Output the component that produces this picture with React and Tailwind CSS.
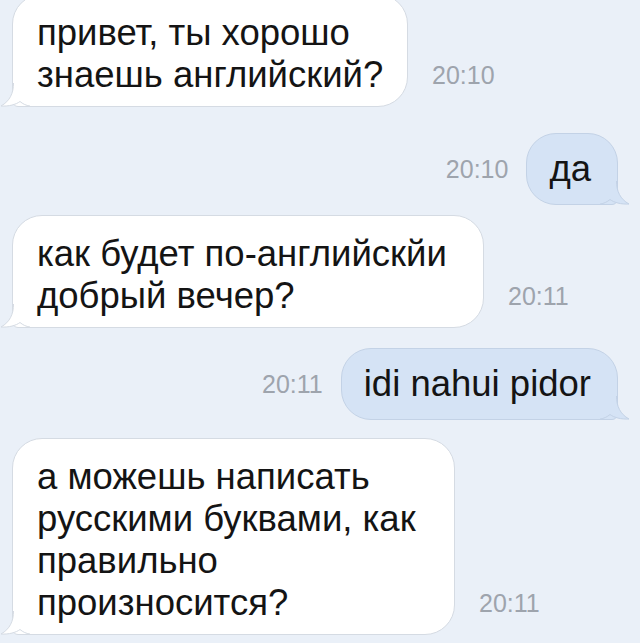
import React from "react";

const TailLeft = ({ fill, stroke }) => (
  <svg
    className="absolute left-[-13px] bottom-[-1px]"
    width="30"
    height="24"
    viewBox="0 0 30 24"
  >
    <path d="M13.5 0 C13.5 10 10 18 1 23 C9 23.5 16 21.5 20 18.5 C23 21 26 22.5 30 23 L30 0 Z" fill={fill} />
    <path d="M13.5 0 C13.5 10 10 18 1 23 C9 23.5 16 21.5 20 18.5 C23 21 26 22.5 30 23" fill="none" stroke={stroke} strokeWidth="1" />
  </svg>
);

const TailRight = ({ fill, stroke }) => (
  <svg
    className="absolute right-[-13px] bottom-[-1px]"
    width="30"
    height="24"
    viewBox="0 0 30 24"
  >
    <path d="M16.5 0 C16.5 10 20 18 29 23 C21 23.5 14 21.5 10 18.5 C7 21 4 22.5 0 23 L0 0 Z" fill={fill} />
    <path d="M16.5 0 C16.5 10 20 18 29 23 C21 23.5 14 21.5 10 18.5 C7 21 4 22.5 0 23" fill="none" stroke={stroke} strokeWidth="1" />
  </svg>
);

const Incoming = ({ lines, time, className, width }) => (
  <div className={"flex items-end pl-[12px] " + className}>
    <div className={"relative bg-white border border-[#d5dbe3] rounded-[30px] rounded-bl-[6px] pt-[17px] pb-[10px] px-[24px] text-[36.5px] leading-[42px] text-[#141414] whitespace-nowrap " + width}>
      {lines.map((l, i) => (
        <div key={i}>{l}</div>
      ))}
      <TailLeft fill="#ffffff" stroke="#d5dbe3" />
    </div>
    <span className="ml-[24px] mb-[13px] text-[25px] text-[#9ea4ad]">{time}</span>
  </div>
);

const Outgoing = ({ text, time, className }) => (
  <div className={"flex items-center justify-end pr-[22px] " + className}>
    <span className="mr-[18px] mt-[2px] text-[25px] text-[#9ea4ad]">{time}</span>
    <div className="relative bg-[#d5e3f5] border border-[#c3d2e6] rounded-[30px] rounded-br-[6px] py-[14px] pl-[22px] pr-[26px] text-[36.5px] leading-[42px] text-[#141414] whitespace-nowrap">
      {text}
      <TailRight fill="#d5e3f5" stroke="#c3d2e6" />
    </div>
  </div>
);

const App = () => {
  return (
    <div className="w-[640px] h-[643px] overflow-hidden bg-[#eaf0f8] font-['Liberation_Sans',Arial,sans-serif]">
      <Incoming
        className="mt-[-6px]"
        width="w-[396px]"
        lines={["привет, ты хорошо", "знаешь английский?"]}
        time="20:10"
      />
      <Outgoing className="mt-[26px]" text="да" time="20:10" />
      <Incoming
        className="mt-[10px]"
        width="w-[472px]"
        lines={["как будет по-английскйи", "добрый вечер?"]}
        time="20:11"
      />
      <Outgoing className="mt-[20px]" text="idi nahui pidor" time="20:11" />
      <Incoming
        className="mt-[18px]"
        width="w-[443px]"
        lines={["а можешь написать", "русскими буквами, как", "правильно", "произносится?"]}
        time="20:11"
      />
    </div>
  );
};

export default App;
